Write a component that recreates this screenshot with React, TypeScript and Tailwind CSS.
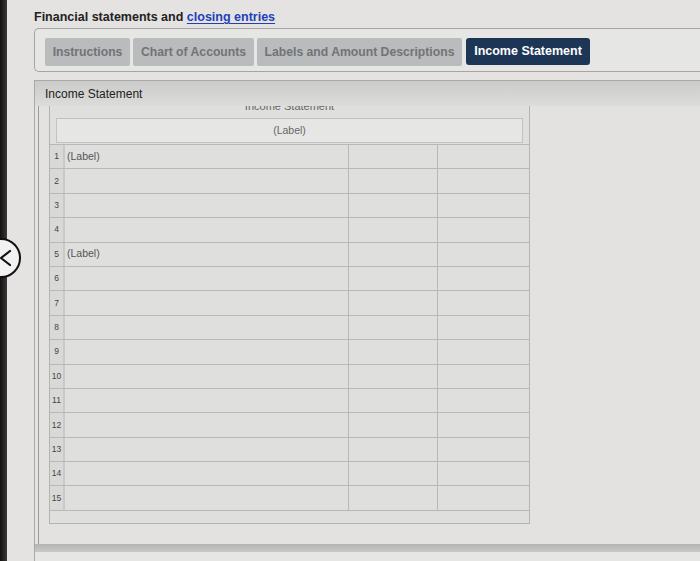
import React from "react";

const rows = Array.from({ length: 15 }, (_, i) => i + 1);
const labelRows: Record<number, string> = { 1: "(Label)", 5: "(Label)" };

export default function App() {
  return (
    <div className="relative flex w-[700px] h-[561px] overflow-hidden bg-[#e4e3e1] font-['Liberation_Sans',Arial,sans-serif]">
      <div className="w-[7px] shrink-0 bg-gradient-to-r from-[#111] to-[#3a3a3a]" />

      {/* back button */}
      <div className="absolute left-[-19px] top-[238px] flex h-[40px] w-[40px] items-center justify-center rounded-full border-[2px] border-[#111] bg-[#f2f2f2]">
        <svg width="14" height="18" viewBox="0 0 14 18" className="ml-[8px]">
          <path d="M12 2 L3 9 L12 16" fill="none" stroke="#111" strokeWidth="2.2" strokeLinecap="round" />
        </svg>
      </div>

      <div className="flex min-w-0 flex-1 flex-col pl-[27px]">
        <div className="pt-[9px] text-[12.5px] font-bold leading-[16px] text-[#222]">
          Financial statements and{" "}
          <span className="text-[#2340b8] underline underline-offset-2">closing entries</span>
        </div>

        {/* tabs */}
        <div className="mt-[3px] flex h-[44px] gap-[3px] rounded-l-[5px] border border-r-0 border-[#a5a5a5] bg-[#e6e6e4] pl-[10px] pt-[9px]">
          <div className="flex h-[28px] w-[85px] items-center justify-center rounded-[2px] bg-[#b9bbbc] text-[12.2px] font-bold text-[#717476]">Instructions</div>
          <div className="flex h-[28px] w-[121px] items-center justify-center rounded-[2px] bg-[#b9bbbc] text-[12.2px] font-bold text-[#717476]">Chart of Accounts</div>
          <div className="flex h-[28px] w-[205px] items-center justify-center rounded-[2px] bg-[#b9bbbc] text-[12.2px] font-bold text-[#717476]">Labels and Amount Descriptions</div>
          <div className="ml-[1px] flex h-[27px] w-[124px] items-center justify-center rounded-[3px] bg-[#1e3656] text-[12.5px] font-bold text-white">Income Statement</div>
        </div>

        {/* panel */}
        <div className="mt-[8px] flex flex-1 flex-col border-l border-t border-[#a9a9a9]">
          <div className="flex h-[25px] items-center bg-gradient-to-b from-[#cbcbca] to-[#dcdcda] pl-[10px] text-[12px] text-[#222]">
            Income Statement
          </div>
          <div className="ml-[3px] flex flex-1 flex-col border-l border-[#9c9c9c] bg-[#e3e2e0] pl-[10px]">
            <div className="flex w-[481px] flex-col border-x border-b border-[#b3b3b3] bg-[#dfdfdd]">
              <div className="h-[6px] overflow-hidden text-center">
                <div className="mt-[-6px] text-[11px] leading-[12px] text-[#666]">Income Statement</div>
              </div>
              <div className="mx-[6px] mt-[6px] flex h-[25px] items-center justify-center border border-[#c2c2c0] bg-[#e6e6e4] text-[10.5px] text-[#666]">
                (Label)
              </div>
              <div className="mt-[1px] border-t border-[#b8b8b8]">
                {rows.map((n) => (
                  <div key={n} className="flex h-[24.4px] border-b border-[#b8b8b8]">
                    <div className="flex w-[15px] shrink-0 items-center justify-center border-r-[2px] border-[#c9c9c7] bg-[#d9d9d7] text-[8.5px] text-[#444]">
                      {n}
                    </div>
                    <div className="flex w-[284px] shrink-0 items-center border-r border-[#b8b8b8] pl-[2px] text-[10.5px] text-[#555]">
                      {labelRows[n] ?? ""}
                    </div>
                    <div className="w-[89px] shrink-0 border-r border-[#b8b8b8]" />
                    <div className="flex-1" />
                  </div>
                ))}
              </div>
              <div className="h-[12px]" />
            </div>
            <div className="flex-1" />
          </div>
          <div className="h-[8px] bg-gradient-to-b from-[#b4b4b4] to-[#c8c8c8]" />
          <div className="h-[9px] bg-[#e6e6e4]" />
        </div>
      </div>
    </div>
  );
}
